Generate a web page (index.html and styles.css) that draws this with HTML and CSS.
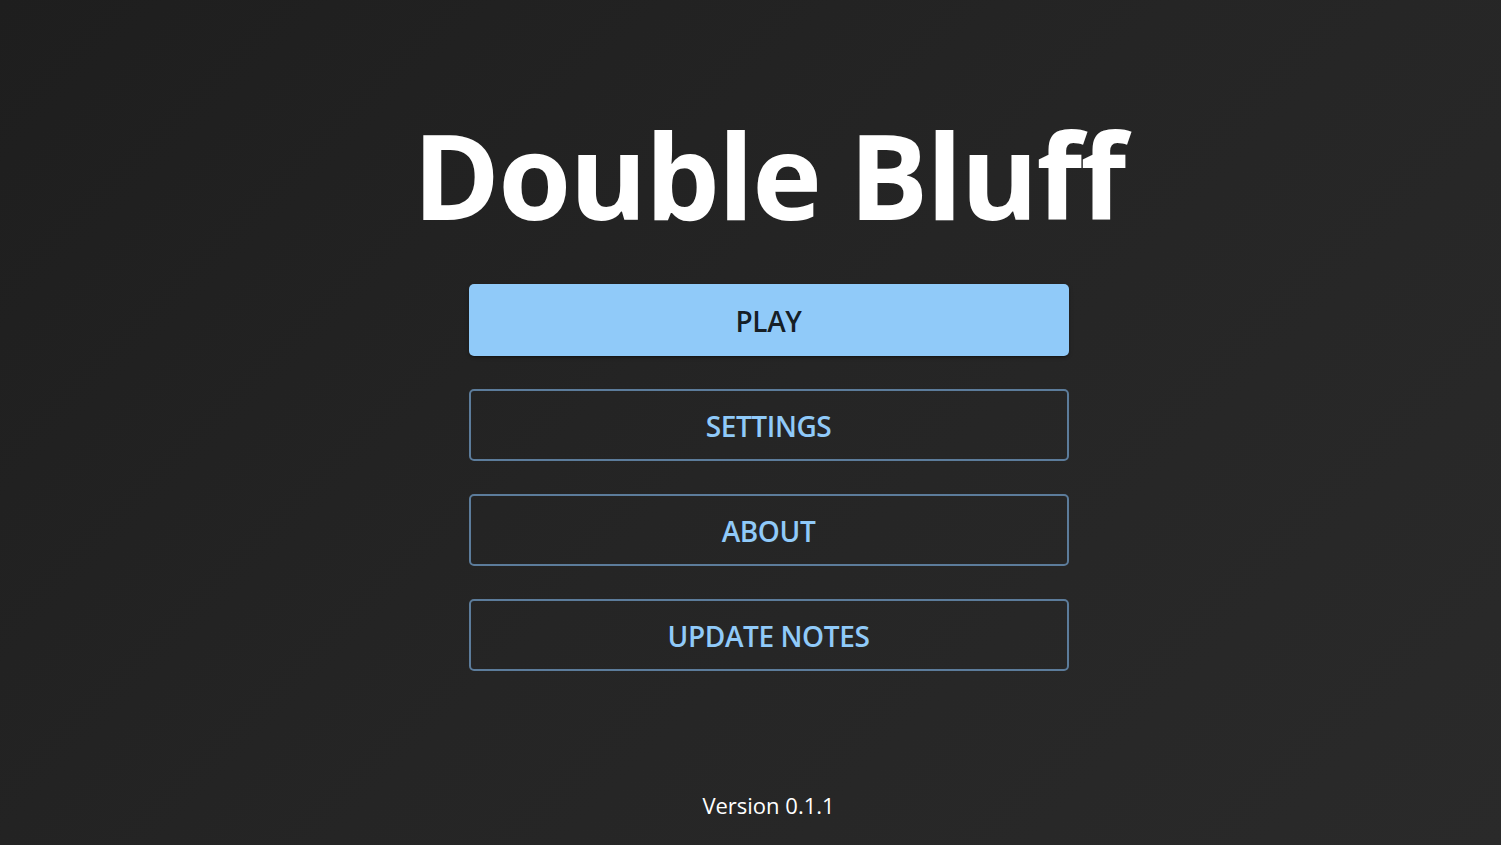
FILE: index.html
```html
<!DOCTYPE html>
<html lang="en">
<head>
<meta charset="utf-8">
<title>Double Bluff</title>
<link rel="stylesheet" href="styles.css">
</head>
<body>
<main class="screen">
  <h1 class="title">Double Bluff</h1>
  <nav class="menu">
    <button class="btn btn-primary">PLAY</button>
    <button class="btn btn-outline">SETTINGS</button>
    <button class="btn btn-outline">ABOUT</button>
    <button class="btn btn-outline">UPDATE NOTES</button>
  </nav>
  <footer class="version">Version 0.1.1</footer>
</main>
</body>
</html>
```
FILE: styles.css
```css
html, body {
  margin: 0;
  height: 100%;
}
body {
  background: linear-gradient(135deg, #1e1e1e 0%, #252525 50%, #2a2a2a 100%);
  font-family: "Open Sans", "Noto Sans", sans-serif;
  color: #fff;
}
.screen {
  height: 100vh;
  box-sizing: border-box;
  display: flex;
  flex-direction: column;
  align-items: center;
  padding-top: 100px;
  padding-left: 36px;
}
.title {
  margin: 0;
  font-size: 118px;
  font-weight: 700;
  line-height: 150px;
  letter-spacing: -1.8px;
}
.menu {
  margin-top: 34px;
  display: flex;
  flex-direction: column;
  gap: 33px;
}
.btn {
  width: 600px;
  height: 72px;
  border-radius: 5px;
  font-family: inherit;
  font-size: 28px;
  font-weight: 600;
  letter-spacing: -0.4px;
  padding: 2px 0 0;
  cursor: pointer;
}
.btn-primary {
  background: #90caf9;
  color: rgba(0,0,0,0.87);
  border: none;
  box-shadow: 0 3px 1px -2px rgba(0,0,0,0.2), 0 2px 2px 0 rgba(0,0,0,0.14), 0 1px 5px 0 rgba(0,0,0,0.12);
}
.btn-outline {
  background: transparent;
  color: #90caf9;
  border: 2px solid #5c7c9b;
}
.version {
  margin-top: auto;
  margin-bottom: 25px;
  font-size: 22px;
}
```
